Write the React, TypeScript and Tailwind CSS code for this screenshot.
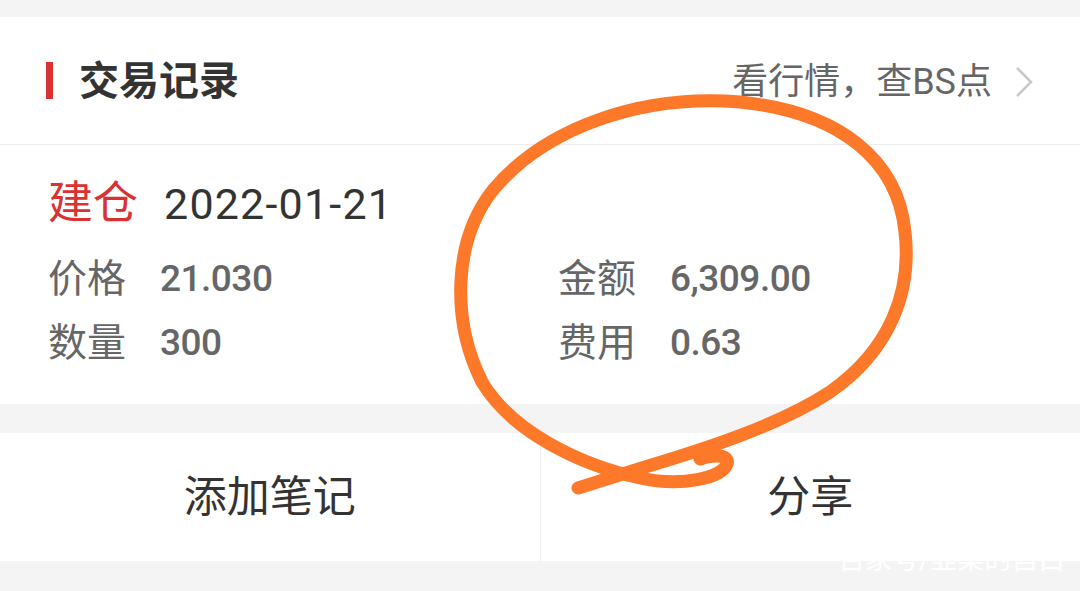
import React from "react";

const cjk = { fontFamily: 'Roboto, "Noto Sans CJK SC", sans-serif' };

function Row({ label, value }: { label: string; value: string }) {
  return (
    <div className="flex h-[64px] items-center">
      <span className="w-[112px] text-[39px] text-[#666]">{label}</span>
      <span className="text-[37px] font-medium tracking-[-0.5px] text-[#666]">{value}</span>
    </div>
  );
}

export default function App() {
  return (
    <div className="relative h-[591px] w-[1080px] overflow-hidden bg-[#f4f4f4]" style={cjk}>
      <div className="h-[17px]" />
      {/* header */}
      <div className="flex h-[128px] items-center border-b border-[#ececec] bg-white pl-[46px] pr-[46px]">
        <div className="h-[37px] w-[7px] bg-[#d93232]" />
        <div className="ml-[26px] pt-[2px] text-[40px] font-bold text-[#333]">交易记录</div>
        <div className="ml-auto flex items-center pt-[2px]">
          <span className="text-[36px] text-[#666]">看行情，查BS点</span>
          <svg width="20" height="32" viewBox="0 0 20 32" className="ml-[22px]">
            <path d="M3 2 L17 16 L3 30" fill="none" stroke="#c8c8c8" strokeWidth="2.5" />
          </svg>
        </div>
      </div>
      {/* card */}
      <div className="h-[259px] bg-white px-[48px] pt-[27px]">
        <div className="flex h-[64px] items-center">
          <span className="text-[45px] text-[#d93232]">建仓</span>
          <span className="ml-[26px] text-[43px] tracking-[1.2px] text-[#333]">2022-01-21</span>
        </div>
        <div className="mt-[11px] flex">
          <div className="w-[510px]">
            <Row label="价格" value="21.030" />
            <Row label="数量" value="300" />
          </div>
          <div>
            <Row label="金额" value="6,309.00" />
            <Row label="费用" value="0.63" />
          </div>
        </div>
      </div>
      <div className="h-[29px]" />
      {/* buttons */}
      <div className="flex h-[128px] bg-white">
        <div className="flex flex-1 items-center justify-center border-r border-[#eeeeee] text-[43px] text-[#333]">
          添加笔记
        </div>
        <div className="flex flex-1 items-center justify-center text-[43px] text-[#333]">分享</div>
      </div>
      {/* watermark */}
      <div className="absolute left-[838px] top-[540px] text-[27px] text-white">百家号/韭菜的自白</div>
      {/* hand-drawn circle */}
      <svg className="pointer-events-none absolute left-0 top-0" width="1080" height="591" viewBox="0 0 1080 591">
        <path
          d="M578 488 L645 467 C705 449 780 425 830 392 C890 350 912 292 905 232 C898 160 840 112 740 102 C640 94 545 128 493 190 C452 242 452 322 482 382 C512 432 580 465 640 478 C682 487 722 478 727 464 C730 455 715 454 700 459"
          fill="none"
          stroke="#fd7828"
          strokeWidth="13"
          strokeLinecap="round"
          strokeLinejoin="round"
        />
      </svg>
    </div>
  );
}
